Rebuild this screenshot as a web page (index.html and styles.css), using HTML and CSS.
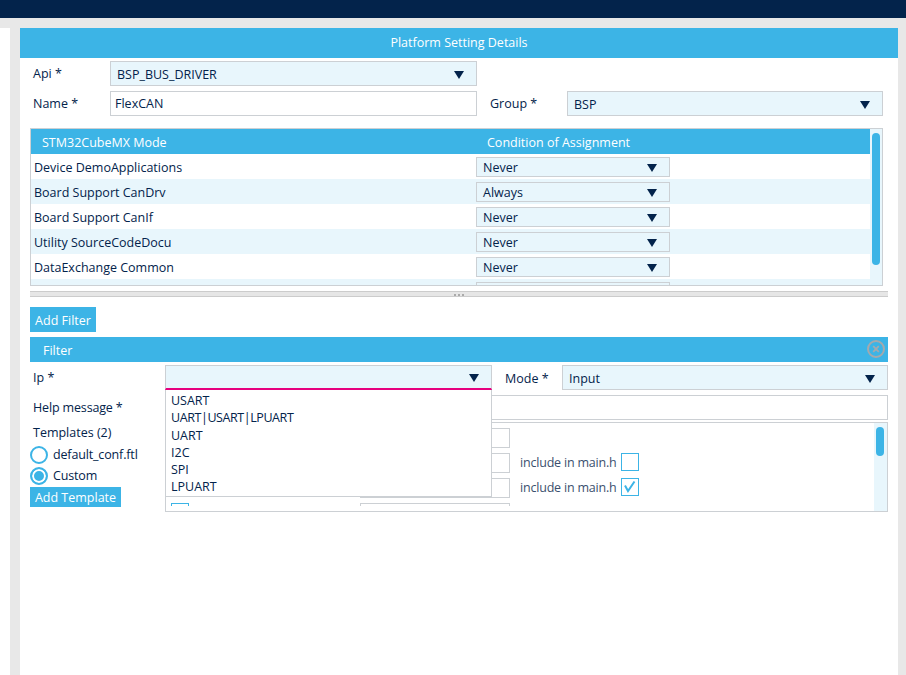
FILE: index.html
```html
<!DOCTYPE html>
<html lang="en">
<head>
<meta charset="utf-8">
<title>Platform Setting Details</title>
<link rel="stylesheet" href="styles.css">
</head>
<body>
<svg class="defs" width="0" height="0"><symbol id="arrow" viewBox="0 0 11 8" preserveAspectRatio="none"><path d="M0 0H11L5.5 8Z"/></symbol></svg>
<header class="topbar"></header>
<div class="shell">
  <aside class="sidebar"></aside>
  <main class="panel">
    <h1 class="panel-title">Platform Setting Details</h1>
    <div class="form">
      <div class="row-api">
        <label class="label">Api *</label>
        <div class="select api-select"><span>BSP_BUS_DRIVER</span><svg class="arrow"><use href="#arrow"/></svg></div>
      </div>
      <div class="row-name">
        <label class="label">Name *</label>
        <div class="input name-input">FlexCAN</div>
        <label class="label group-label">Group *</label>
        <div class="select group-select"><span>BSP</span><svg class="arrow"><use href="#arrow"/></svg></div>
      </div>
    </div>
    <section class="table">
      <div class="table-body">
        <div class="thead"><span class="th-mode">STM32CubeMX Mode</span><span>Condition of Assignment</span></div>
        <div class="tr"><span class="td-name">Device DemoApplications</span><div class="select cell-select"><span>Never</span><svg class="arrow"><use href="#arrow"/></svg></div></div>
        <div class="tr alt"><span class="td-name">Board Support CanDrv</span><div class="select cell-select"><span>Always</span><svg class="arrow"><use href="#arrow"/></svg></div></div>
        <div class="tr"><span class="td-name">Board Support CanIf</span><div class="select cell-select"><span>Never</span><svg class="arrow"><use href="#arrow"/></svg></div></div>
        <div class="tr alt"><span class="td-name">Utility SourceCodeDocu</span><div class="select cell-select"><span>Never</span><svg class="arrow"><use href="#arrow"/></svg></div></div>
        <div class="tr"><span class="td-name">DataExchange Common</span><div class="select cell-select"><span>Never</span><svg class="arrow"><use href="#arrow"/></svg></div></div>
        <div class="tr alt"><span class="td-name"></span><div class="select cell-select"></div></div>
      </div>
      <div class="scrolltrack table-track"><div class="thumb table-thumb"></div></div>
    </section>
    <div class="splitter"><span class="grip"></span></div>
    <button class="btn add-filter">Add Filter</button>
    <section class="filter">
      <div class="filter-head"><span class="filter-title">Filter</span>
        <svg class="close" width="20" height="20" viewBox="0 0 20 20"><circle cx="10" cy="10" r="8"/><path d="M7.2 7.2L12.8 12.8M12.8 7.2L7.2 12.8"/></svg>
      </div>
      <div class="row-ip">
        <label class="label">Ip *</label>
        <div class="ip-wrap">
          <div class="select ip-select"><svg class="arrow"><use href="#arrow"/></svg></div>
          <ul class="menu">
            <li>USART</li><li class="long">UART|USART|LPUART</li><li>UART</li><li>I2C</li><li>SPI</li><li>LPUART</li>
          </ul>
        </div>
        <label class="label mode-label">Mode *</label>
        <div class="select mode-select"><span>Input</span><svg class="arrow"><use href="#arrow"/></svg></div>
      </div>
      <div class="row-help">
        <label class="label">Help message *</label>
        <div class="input help-input"></div>
      </div>
      <div class="row-templates">
        <div class="templates-side">
          <div class="label templates-label">Templates (2)</div>
          <div class="radio"><span class="dot"></span>default_conf.ftl</div>
          <div class="radio"><span class="dot on"></span>Custom</div>
          <button class="btn add-template">Add Template</button>
        </div>
        <div class="templates-box">
          <div class="templates-list">
            <div class="tpl"><span class="check"></span><span class="input tpl-input"></span></div>
            <div class="tpl"><span class="check"></span><span class="input tpl-input"></span><span class="inc">include in main.h</span><span class="check"></span></div>
            <div class="tpl"><span class="check"></span><span class="input tpl-input"></span><span class="inc">include in main.h</span><span class="check"><svg width="18" height="18" viewBox="0 0 18 18"><path class="tick" d="M4 7.5L7 13L13.5 3.5"/></svg></span></div>
            <div class="tpl"><span class="check"></span><span class="input tpl-input"></span></div>
          </div>
          <div class="scrolltrack tpl-track"><div class="thumb tpl-thumb"></div></div>
        </div>
      </div>
    </section>
  </main>
</div>
</body>
</html>
```
FILE: styles.css
```css
* { box-sizing: border-box; }
html, body { margin: 0; height: 675px; overflow: hidden; }
body { background: #e8e8e8; color: #03234b; font: 12.5px/16px "Open Sans", "Noto Sans", sans-serif; }
.defs { position: absolute; }
.topbar { height: 18px; background: #03234b; }
.shell { display: flex; gap: 10px; height: 647px; margin-top: 10px; }
.sidebar { width: 10px; background: #fff; }
.panel { width: 878px; background: #fff; }
.panel-title { margin: 0; height: 30px; background: #3cb4e6; color: #fff; font: inherit; line-height: 30px; text-align: center; }
.form { padding: 3px 15px 0 13px; }
.label { line-height: 25px; }
.row-api { display: grid; grid-template-columns: 77px 367px; height: 25px; }
.row-name { display: grid; grid-template-columns: 77px 367px 90px 316px; margin-top: 5px; height: 25px; }
.row-name .group-label { padding-left: 13px; }
.select, .input { height: 25px; border: 1px solid #ccd0d4; line-height: 23px; }
.select { display: flex; align-items: center; justify-content: space-between; background: #e8f6fc; padding: 0 12px 0 6px; }
.select span { padding-top: 2px; }
.input { background: #fff; padding: 0 4px; display: block; }
.arrow { width: 10px; height: 8px; margin: 2px 0 0 auto; fill: #03234b; flex: none; }
.table { display: flex; width: 853px; height: 158px; margin: 12px 0 0 10px; border: 1px solid #ccd0d4; overflow: hidden; }
.table-body { width: 839px; }
.thead { display: grid; grid-template-columns: 445px 1fr; height: 25px; padding-left: 11px; background: #3cb4e6; color: #fff; line-height: 28px; }
.tr { display: grid; grid-template-columns: 445px 194px; align-items: center; height: 25px; background: #fff; }
.tr.alt { background: #e8f6fc; }
.td-name { padding: 2px 0 0 3px; }
.cell-select { height: 20px; line-height: 18px; }
.scrolltrack { flex: none; background: #e8f6fc; }
.table-track { width: 12px; padding: 4px 2px 0; }
.thumb { width: 8px; background: #3cb4e6; border-radius: 4px; }
.table-thumb { height: 132px; }
.splitter { display: flex; justify-content: center; width: 858px; height: 6px; margin: 5px 0 0 10px; background: #e6e6e6; border-top: 1px solid #ccc; border-bottom: 1px solid #ccc; }
.grip { width: 11px; height: 2px; margin-top: 2px; background: repeating-linear-gradient(90deg, #aaa 0 2px, transparent 2px 4px); }
.btn { display: block; margin: 0; padding: 2px 0 0; border: 0; background: #3cb4e6; color: #fff; font: inherit; }
.add-filter { width: 66px; height: 25px; margin: 10px 0 0 10px; }
.filter { width: 858px; margin: 5px 0 0 10px; }
.filter-head { display: flex; align-items: center; justify-content: space-between; height: 25px; padding: 0 2px 0 13px; background: #3cb4e6; color: #fff; }
.filter-title { padding-top: 2px; }
.close { margin-top: -1px; fill: none; stroke: #a5a9ad; stroke-width: 2; }
.close path { stroke-width: 1.8; }
.row-ip { display: grid; grid-template-columns: 135px 327px 70px 326px; margin-top: 3px; height: 25px; }
.row-ip > .label:first-child, .row-help > .label, .templates-label { padding-left: 3px; }
.row-ip > .label:first-child { line-height: 26px; }
.ip-wrap { position: relative; }
.ip-select { border-bottom: 2px solid #e6007e; }
.mode-label { padding-left: 13px; line-height: 27px; }
.menu { position: absolute; z-index: 2; top: 25px; left: 0; width: 327px; height: 107px; margin: 0; padding: 2px 5px; list-style: none; background: #fff; border: 1px solid #ccd0d4; border-top: 0; }
.menu li { height: 17.3px; line-height: 17px; }
.menu li.long { letter-spacing: -0.42px; }
.row-help { display: grid; grid-template-columns: 135px 723px; margin-top: 5px; height: 25px; }
.row-help > .label { letter-spacing: -0.15px; }
.row-templates { display: grid; grid-template-columns: 135px 723px; margin-top: 2px; height: 90px; }
.templates-side { display: flex; flex-direction: column; align-items: flex-start; }
.templates-label { height: 22px; line-height: 21px; }
.radio { display: flex; align-items: center; gap: 5px; height: 21px; letter-spacing: -0.15px; }
.radio .dot { width: 18px; height: 18px; border: 2px solid #3cb4e6; border-radius: 50%; background: #fff; }
.radio .dot.on { background: #3cb4e6; box-shadow: inset 0 0 0 2px #fff; }
.add-template { width: 91px; height: 20px; margin-top: 1px; }
.templates-box { display: flex; justify-content: space-between; height: 90px; border: 1px solid #ccd0d4; overflow: hidden; }
.templates-list { height: 83px; padding: 5px 0 0 5px; overflow: hidden; }
.tpl { display: flex; align-items: flex-start; height: 25px; }
.tpl .check:first-child { margin-right: 171px; }
.check { display: block; flex: none; width: 18px; height: 18px; border: 1px solid #3cb4e6; background: #fff; }
.check svg { display: block; margin: -1px; }
.tick { fill: none; stroke: #3cb4e6; stroke-width: 2; }
.tpl-input { width: 150px; height: 20px; }
.inc { width: 111px; padding-left: 10px; line-height: 20px; white-space: nowrap; letter-spacing: -0.2px; color: #3a4f6e; }
.tpl-track { width: 13px; padding: 4px 2px 0 2px; }
.tpl-thumb { height: 29px; }
```
